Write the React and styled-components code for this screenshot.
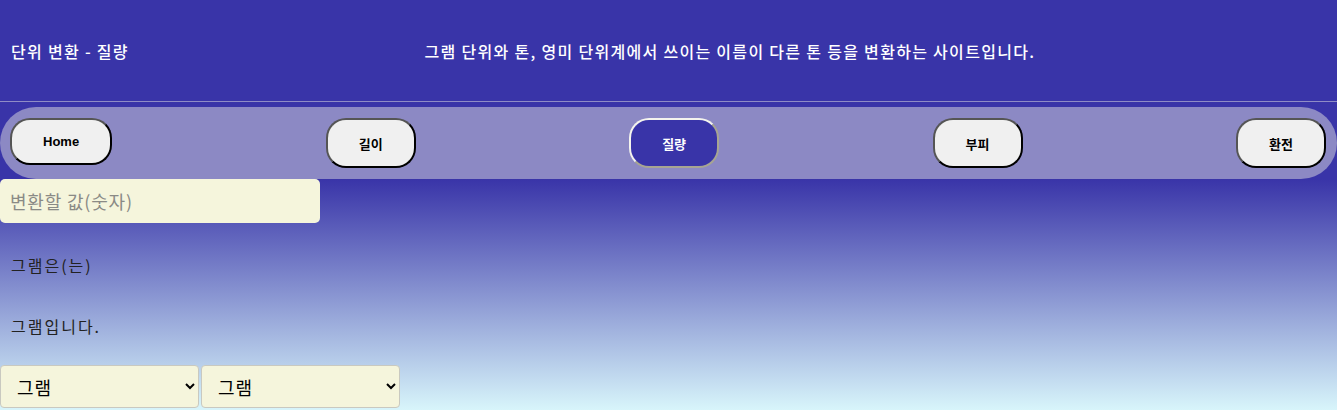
import React from 'react';
import styled, { createGlobalStyle } from 'styled-components';

const GlobalStyle = createGlobalStyle`
  body {
    margin: 0;
    font-family: "Noto Sans CJK KR", "Noto Sans", sans-serif;
  }
`;

const menus = [
  { name: 'Home', short: true },
  { name: '길이' },
  { name: '질량', active: true },
  { name: '부피' },
  { name: '환전' },
];

const App = () => {
  return (
    <Page>
      <GlobalStyle />
      <Header>
        <Title>단위 변환 - 질량</Title>
        <Description>
          그램 단위와 톤, 영미 단위계에서 쓰이는 이름이 다른 톤 등을 변환하는 사이트입니다.
        </Description>
      </Header>
      <Nav>
        {menus.map((menu) => (
          <MenuButton key={menu.name} $active={menu.active} $short={menu.short}>
            {menu.name}
          </MenuButton>
        ))}
      </Nav>
      <Main>
        <ValueInput placeholder="변환할 값(숫자)" />
        <ResultText $top={30}>그램은(는)</ResultText>
        <ResultText $top={37}>그램입니다.</ResultText>
        <SelectRow>
          <UnitSelect defaultValue="g">
            <option value="g">그램</option>
            <option value="kg">킬로그램</option>
            <option value="t">톤</option>
          </UnitSelect>
          <UnitSelect defaultValue="g">
            <option value="g">그램</option>
            <option value="kg">킬로그램</option>
            <option value="t">톤</option>
          </UnitSelect>
        </SelectRow>
      </Main>
    </Page>
  );
};

const Page = styled.div`
  min-height: 100vh;
  background: linear-gradient(to bottom, #3934a8 0, #3934a8 179px, #e0ffff 422px);
`;

const Header = styled.header`
  display: flex;
  align-items: center;
  height: 101px;
  background: #3934a8;
  border-bottom: 1px solid #8f8cc6;
  color: white;
  font-size: 16px;
  font-weight: 500;
  letter-spacing: 1.3px;
`;

const Title = styled.div`
  padding: 0 10px 0 11px;
  white-space: nowrap;
`;

const Description = styled.div`
  flex: 1;
  text-align: center;
  padding-right: 16px;
`;

const Nav = styled.nav`
  display: flex;
  justify-content: space-between;
  align-items: flex-start;
  box-sizing: border-box;
  height: 72px;
  margin-top: 5px;
  padding: 11px 11px 0 10px;
  background: #8c89c4;
  border-radius: 36px;
`;

const MenuButton = styled.button`
  box-sizing: border-box;
  height: ${(props) => (props.$short ? '47px' : '50px')};
  padding: 0 31px;
  border: 2px solid;
  border-color: ${(props) =>
    props.$active ? '#f4f4ee #a7a592 #a7a592 #f4f4ee' : '#555 #000 #000 #555'};
  border-radius: 20px;
  background: ${(props) => (props.$active ? '#3934a8' : '#f0f0f0')};
  color: ${(props) => (props.$active ? 'white' : 'black')};
  font-family: "Liberation Sans", "Noto Sans CJK KR", sans-serif;
  font-size: 13px;
  font-weight: bold;
`;

const Main = styled.main`
  display: flex;
  flex-direction: column;
  align-items: flex-start;
`;

const ValueInput = styled.input`
  box-sizing: border-box;
  width: 320px;
  height: 44px;
  padding: 0 10px;
  border: none;
  border-radius: 5px;
  background: #f5f5dc;
  font-family: "Noto Sans CJK KR", sans-serif;
  font-size: 18px;
  letter-spacing: 0.8px;
  outline: none;

  &::placeholder {
    color: #8a8a86;
  }
`;

const ResultText = styled.div`
  margin-top: ${(props) => props.$top}px;
  padding-left: 11px;
  line-height: 24px;
  font-size: 16px;
  letter-spacing: 2px;
  color: #222;
`;

const SelectRow = styled.div`
  display: flex;
  gap: 2px;
  margin-top: 27px;
`;

const UnitSelect = styled.select`
  box-sizing: border-box;
  width: 199px;
  height: 43px;
  padding: 0 8px 0 12px;
  border: 1px solid #c9c9c0;
  border-radius: 4px;
  background: #f5f5dc;
  color: black;
  font-family: "Noto Sans CJK KR", sans-serif;
  font-size: 18px;
  letter-spacing: 1px;
`;

export default App;
